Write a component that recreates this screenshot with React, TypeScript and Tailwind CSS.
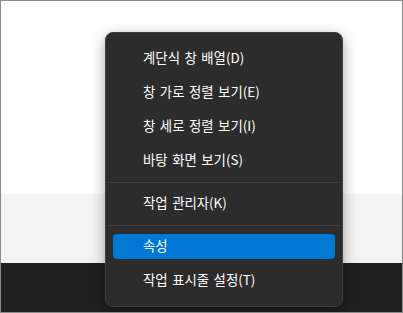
import React from "react";

type Entry = { kind: "item"; label: string; active?: boolean } | { kind: "sep" };

const entries: Entry[] = [
  { kind: "item", label: "계단식 창 배열(D)" },
  { kind: "item", label: "창 가로 정렬 보기(E)" },
  { kind: "item", label: "창 세로 정렬 보기(I)" },
  { kind: "item", label: "바탕 화면 보기(S)" },
  { kind: "sep" },
  { kind: "item", label: "작업 관리자(K)" },
  { kind: "sep" },
  { kind: "item", label: "속성", active: true },
  { kind: "item", label: "작업 표시줄 설정(T)" },
];

export default function App() {
  return (
    <div
      className="relative w-[403px] h-[313px] overflow-hidden border border-[#8a8a8a] flex flex-col"
      style={{ fontFamily: '"Noto Sans CJK KR", "Noto Sans", sans-serif' }}
    >
      <div className="h-[193px] bg-white" />
      <div className="h-[69px] bg-[#f3f3f3]" />
      <div className="flex-1 bg-[#202020]" />

      <div className="absolute left-[104px] top-[31px] w-[238px] rounded-[8px] border border-[#3f3f3f] bg-[#2c2c2c] pt-[8px] pb-[9px] shadow-[0_4px_14px_rgba(0,0,0,0.35)]">
        {entries.map((e, i) =>
          e.kind === "sep" ? (
            <div key={i} className="h-[9px] pt-[5px]">
              <div className="mx-px h-px bg-[#3d3d3d]" />
            </div>
          ) : (
            <div key={i} className="h-[34px] flex items-center px-[7px]">
              <div
                className={
                  "h-[25px] w-full rounded-[4px] flex items-center pl-[30px] text-[13.4px] text-white leading-none [word-spacing:1.5px] " +
                  (e.active ? "bg-[#0078d4]" : "")
                }
              >
                {e.label}
              </div>
            </div>
          )
        )}
      </div>
    </div>
  );
}
